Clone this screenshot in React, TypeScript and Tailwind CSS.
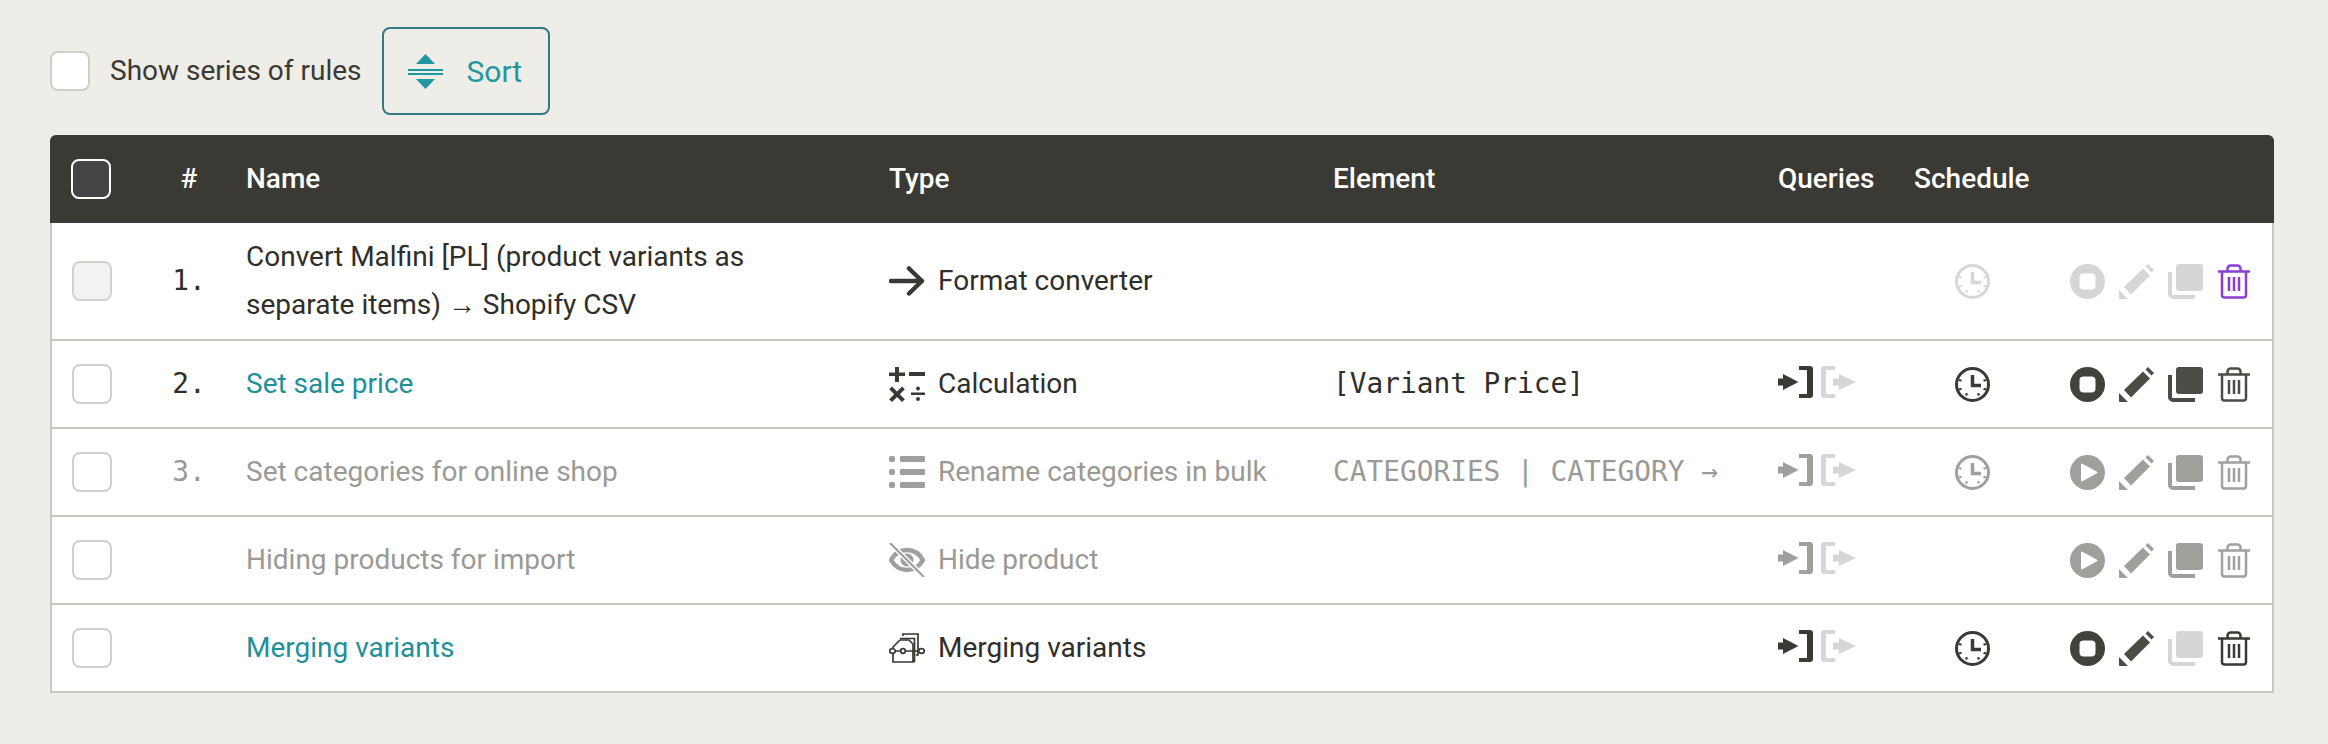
import React from 'react';

const DARK = '#3a3934';
const GRAY = '#a09f9c';
const LIGHT = '#d6d6d5';

type IconProps = { color: string };

const ArrowRightIcon: React.FC<IconProps> = ({ color }) => (
  <svg width="36" height="30" viewBox="0 0 36 30" fill="none" stroke={color} strokeWidth="4.500" strokeLinecap="round" strokeLinejoin="round">
    <path d="M2 15H33M20 2.500L33 15L20 27.500" />
  </svg>
);

const CalcIcon: React.FC<IconProps> = ({ color }) => (
  <svg width="36" height="36" viewBox="0 0 36 36" fill={color}>
    <path d="M6 1h4v5.500h6v3.500h-6v6h-4v-6h-6v-3.500h6z" />
    <rect x="20" y="6" width="16" height="4" />
    <path d="M3 20.500l5 5 5-5 2.800 2.800-5 5 5 5-2.800 2.700-5-5-5 5-2.800-2.700 5-5-5-5z" />
    <rect x="22" y="26.500" width="14" height="2.500" />
    <circle cx="29" cy="22.500" r="2" />
    <circle cx="29" cy="33" r="2" />
  </svg>
);

const ListIcon: React.FC<IconProps> = ({ color }) => (
  <svg width="36" height="32" viewBox="0 0 36 32" fill={color}>
    <rect x="0" y="0" width="6" height="6" rx="2" />
    <rect x="11" y="0" width="25" height="6" rx="1" />
    <rect x="0" y="13" width="6" height="6" rx="2" />
    <rect x="11" y="13" width="25" height="6" rx="1" />
    <rect x="0" y="26" width="6" height="6" rx="2" />
    <rect x="11" y="26" width="25" height="6" rx="1" />
  </svg>
);

const EyeOffIcon: React.FC<IconProps> = ({ color }) => (
  <svg width="36" height="34" viewBox="0 0 36 34" fill="none">
    <path d="M2 17C6 10 11 7 18 7s12 3 16 10c-4 7-9 10-16 10S6 24 2 17z" stroke={color} strokeWidth="4.500" />
    <circle cx="18" cy="17" r="6.500" fill={color} />
    <path d="M3 2L33 32" stroke="#ffffff" strokeWidth="5" />
    <path d="M1 0L35 34" stroke={color} strokeWidth="2.200" />
  </svg>
);

const MergeIcon: React.FC<IconProps> = ({ color }) => (
  <svg width="36" height="30" viewBox="0 0 36 30" fill="none" stroke={color} strokeWidth="1.700">
    <path d="M14 3V1h15v21h-2" />
    <path d="M11 5.500h14.500v23H24" />
    <path d="M11 7h9l4 4v18H4V14z" fill="#ffffff" />
    <path d="M1 18h11M16 18h19" />
    <ellipse cx="3.500" cy="18" rx="2.800" ry="2.300" fill="#ffffff" />
    <circle cx="14" cy="18" r="2.300" fill="#ffffff" />
    <ellipse cx="32.500" cy="18" rx="2.800" ry="2.300" fill="#ffffff" />
  </svg>
);

const QueryInIcon: React.FC<IconProps> = ({ color }) => (
  <svg width="36" height="32" viewBox="0 0 36 32" fill={color}>
    <path d="M0 12.500h5V8l15.500 8-15.500 8v-4.500H0z" />
    <path d="M21 0h11a3 3 0 0 1 3 3v26a3 3 0 0 1-3 3H21v-4h8V4h-8z" />
  </svg>
);

const QueryOutIcon: React.FC<IconProps> = ({ color }) => (
  <svg width="35" height="32" viewBox="0 0 35 32" fill={color}>
    <path d="M14 0H3a3 3 0 0 0-3 3v26a3 3 0 0 0 3 3h11v-4H5V4h9z" />
    <path d="M12 12.500h6V8l17 8-17 8v-4.500h-6z" />
  </svg>
);

const ClockIcon: React.FC<IconProps> = ({ color }) => (
  <svg width="35" height="35" viewBox="0 0 35 35" fill="none" stroke={color}>
    <circle cx="17.500" cy="17.500" r="16" strokeWidth="3" />
    <path d="M17.500 8v10.500H26" strokeWidth="3.500" />
    <path d="M4 13l2.500 0.800M31 13l-2.500 0.800M11 28.500l1-2.200M24 28.500l-1-2.200M4 22.500l2.500-0.800M31 22.500l-2.500-0.800" strokeWidth="2.200" />
  </svg>
);

const StopIcon: React.FC<IconProps> = ({ color }) => (
  <svg width="35" height="35" viewBox="0 0 35 35">
    <circle cx="17.500" cy="17.500" r="17.500" fill={color} />
    <rect x="9.500" y="9.500" width="16" height="16" rx="4" fill="#ffffff" />
  </svg>
);

const PlayIcon: React.FC<IconProps> = ({ color }) => (
  <svg width="35" height="35" viewBox="0 0 35 35">
    <circle cx="17.500" cy="17.500" r="17.500" fill={color} />
    <path d="M11 9.500a1 1 0 0 1 1.500-.8l14.500 8a1 1 0 0 1 0 1.600l-14.500 8a1 1 0 0 1-1.500-.8z" fill="#ffffff" />
  </svg>
);

const PencilIcon: React.FC<IconProps> = ({ color }) => (
  <svg width="35" height="35" viewBox="0 0 35 35" fill={color}>
    <path d="M5 23L24 4.500 31 11.500 12 30.500z" />
    <path d="M26.500 2.500L29 0l6 6-2.500 2.500z" />
    <path d="M0 26l9 9-7 0.400a2 2 0 0 1-2-2z" />
  </svg>
);

const CopyIcon: React.FC<IconProps> = ({ color }) => (
  <svg width="35" height="35" viewBox="0 0 35 35" fill="none">
    <rect x="8" y="0" width="27" height="27" rx="3" fill={color} />
    <path d="M2 8V30a3 3 0 0 0 3 3H27" stroke={color} strokeWidth="4" />
  </svg>
);

const TrashIcon: React.FC<IconProps> = ({ color }) => (
  <svg width="32" height="35" viewBox="0 0 32 35" fill="none" stroke={color} strokeWidth="2.500">
    <path d="M0 7.500H32M9.500 7V4.500a3 3 0 0 1 3-3h7a3 3 0 0 1 3 3V7" />
    <path d="M4 7.500V31a2.500 2.500 0 0 0 2.500 2.500h19A2.500 2.500 0 0 0 28 31V7.500" />
    <path d="M11 13v14M16 13v14M21 13v14" />
  </svg>
);

type Row = {
  num?: string;
  name: string;
  link?: boolean;
  type: string;
  typeIcon: React.FC<IconProps>;
  element?: string;
  tone: 'normal' | 'muted';
  queries?: boolean;
  schedule?: string;
  toggle: 'stop' | 'play';
  toggleColor: string;
  pencilColor: string;
  copyColor: string;
  trashColor: string;
  disabledCheck?: boolean;
};

const rows: Row[] = [
  {
    num: '1.',
    name: 'Convert Malfini [PL] (product variants as separate items) → Shopify CSV',
    type: 'Format converter',
    typeIcon: ArrowRightIcon,
    tone: 'normal',
    schedule: LIGHT,
    toggle: 'stop',
    toggleColor: LIGHT,
    pencilColor: LIGHT,
    copyColor: LIGHT,
    trashColor: '#8a3fd0',
    disabledCheck: true,
  },
  {
    num: '2.',
    name: 'Set sale price',
    link: true,
    type: 'Calculation',
    typeIcon: CalcIcon,
    element: '[Variant Price]',
    tone: 'normal',
    queries: true,
    schedule: DARK,
    toggle: 'stop',
    toggleColor: '#42413b',
    pencilColor: '#4c4b45',
    copyColor: '#4c4b45',
    trashColor: '#4c4b45',
  },
  {
    num: '3.',
    name: 'Set categories for online shop',
    type: 'Rename categories in bulk',
    typeIcon: ListIcon,
    element: 'CATEGORIES | CATEGORY →',
    tone: 'muted',
    queries: true,
    schedule: GRAY,
    toggle: 'play',
    toggleColor: GRAY,
    pencilColor: GRAY,
    copyColor: GRAY,
    trashColor: GRAY,
  },
  {
    name: 'Hiding products for import',
    type: 'Hide product',
    typeIcon: EyeOffIcon,
    tone: 'muted',
    queries: true,
    toggle: 'play',
    toggleColor: GRAY,
    pencilColor: GRAY,
    copyColor: GRAY,
    trashColor: GRAY,
  },
  {
    name: 'Merging variants',
    link: true,
    type: 'Merging variants',
    typeIcon: MergeIcon,
    tone: 'normal',
    queries: true,
    schedule: DARK,
    toggle: 'stop',
    toggleColor: '#42413b',
    pencilColor: '#4c4b45',
    copyColor: LIGHT,
    trashColor: DARK,
  },
];

const gridCols = 'grid grid-cols-[104px_70px_665px_444px_445px_136px_156px_1fr] items-center';

const App: React.FC = () => {
  return (
    <div className="min-h-[744px] bg-[#eeede8] pl-[50px] pr-[54px] pt-[27px] font-['Roboto',sans-serif] text-[28px] text-[#2f2e2a]">
      <div className="flex items-center h-[88px]">
        <span className="block w-[40px] h-[40px] rounded-[8px] border-2 border-[#cfcec8] bg-white" />
        <span className="ml-[20px] mr-[20px] text-[#3a3934]">Show series of rules</span>
        <button className="flex items-center w-[168px] h-[88px] pl-[24px] rounded-[8px] border-2 border-[#2f7a85] text-[#1f97a0] text-[30px]">
          <svg width="35" height="35" viewBox="0 0 35 35" fill="#1f97a0">
            <path d="M17.500 0L27 10H8z" />
            <rect x="0" y="15" width="35" height="2" />
            <rect x="0" y="19" width="35" height="2" />
            <path d="M8 25H27L17.500 35z" />
          </svg>
          <span className="ml-[24px]">Sort</span>
        </button>
      </div>

      <div className="mt-[20px]">
        <div className={`${gridCols} h-[88px] rounded-t-[6px] bg-[#3a3934] text-white font-medium`}>
          <div className="pl-[21px]">
            <span className="block w-[40px] h-[40px] rounded-[8px] border-2 border-white bg-[#454545]" />
          </div>
          <div className="text-center">#</div>
          <div className="pl-[22px]">Name</div>
          <div>Type</div>
          <div>Element</div>
          <div>Queries</div>
          <div>Schedule</div>
          <div />
        </div>

        <div className="border-x-2 border-[#c9c8c1] bg-white">
          {rows.map((row, i) => {
            const Type = row.typeIcon;
            const muted = row.tone === 'muted';
            const iconColor = muted ? GRAY : DARK;
            return (
              <div
                key={i}
                className={`${gridCols} ml-[-2px] mr-[-2px] border-b-2 border-[#c9c8c1] ${i === 0 ? 'h-[118px]' : 'h-[88px]'} ${muted ? 'text-[#9a9996]' : ''}`}
              >
                <div className="pl-[22px]">
                  <span className={`block w-[40px] h-[40px] rounded-[8px] border-2 border-[#d2d1cc] ${row.disabledCheck ? 'bg-[#f2f2f1]' : 'bg-white'}`} />
                </div>
                <div className="text-center font-['DejaVu_Sans_Mono',monospace] text-[27.8px]">{row.num}</div>
                <div className={`pl-[22px] leading-[48px] pr-[70px] ${row.link ? 'text-[#1f8f99]' : ''}`}>{row.name}</div>
                <div className="flex items-center gap-[13px]">
                  <span className="flex w-[36px] justify-center">
                    <Type color={iconColor} />
                  </span>
                  {row.type}
                </div>
                <div className="font-['DejaVu_Sans_Mono',monospace] text-[27.8px] whitespace-nowrap">{row.element}</div>
                <div className="flex items-center gap-[7px] mb-[4px]">
                  {row.queries && (
                    <>
                      <QueryInIcon color={iconColor} />
                      <QueryOutIcon color={LIGHT} />
                    </>
                  )}
                </div>
                <div className="pl-[41px]">{row.schedule && <ClockIcon color={row.schedule} />}</div>
                <div className="flex items-center gap-[14px]">
                  {row.toggle === 'stop' ? <StopIcon color={row.toggleColor} /> : <PlayIcon color={row.toggleColor} />}
                  <PencilIcon color={row.pencilColor} />
                  <CopyIcon color={row.copyColor} />
                  <span className="ml-[1px]">
                    <TrashIcon color={row.trashColor} />
                  </span>
                </div>
              </div>
            );
          })}
        </div>
      </div>
    </div>
  );
};

export default App;
